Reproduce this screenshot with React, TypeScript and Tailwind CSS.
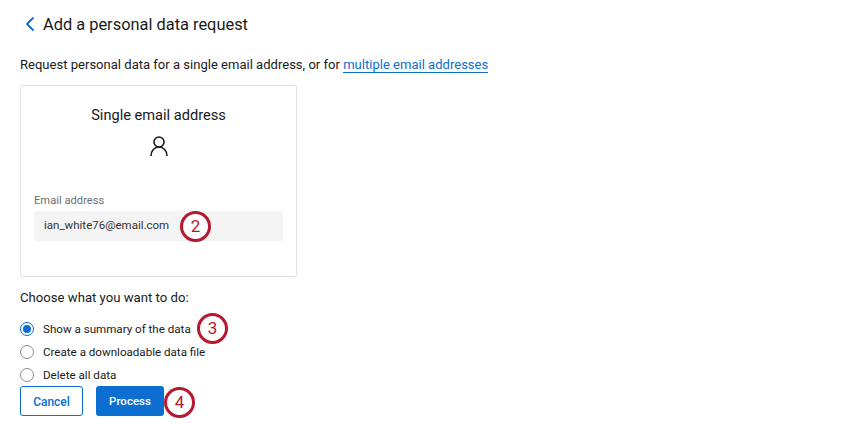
import { ChevronLeft } from 'lucide-react';

type BadgeProps = {
    n: number;
    className: string;
};

// Red numbered callout that sits over the screenshot content
function Badge({ n, className }: BadgeProps) {
    return (
        <span
            className={`absolute flex h-[31px] w-[31px] items-center justify-center rounded-full border-[3px] border-[#b5192f] bg-white text-[17px] text-[#b5192f] ${className}`}
        >
            {n}
        </span>
    );
}

function Radio({ label, checked }: { label: string; checked?: boolean }) {
    return (
        <label className="flex h-[23px] items-center gap-[9px] text-[11.6px] text-[#1a1a1a]">
            <span
                className={`flex h-[14px] w-[14px] items-center justify-center rounded-full border bg-white ${checked ? 'border-[#0b6ed0]' : 'border-[#8c8c8c]'}`}
            >
                {checked && <span className="h-[8px] w-[8px] rounded-full bg-[#0b6ed0]" />}
            </span>
            <span className="pt-[2px]">{label}</span>
        </label>
    );
}

export default function App() {
    return (
        <div className="h-[424px] w-[850px] overflow-hidden bg-white pl-[20px] font-['Roboto',sans-serif] text-[#1a1a1a]">
            <header className="flex h-[48px] items-center gap-[1px] -ml-[2px]">
                <ChevronLeft className="h-[24px] w-[24px] text-[#0b6ed0]" strokeWidth={1.8} />
                <h1 className="pt-[2px] text-[16.4px] leading-none">Add a personal data request</h1>
            </header>

            <p className="mt-[7px] text-[13.05px] leading-[20px]">
                Request personal data for a single email address, or for{' '}
                <a className="border-b border-[#0b6ed0] text-[#0b6ed0]">multiple email addresses</a>
            </p>

            <section className="mt-[10px] flex h-[192px] w-[277px] flex-col rounded-[2px] border border-[#e3e3e3] px-[13px] pt-[19px] shadow-[0_0_1px_rgba(0,0,0,0.08)]">
                <h2 className="text-center text-[14.6px] leading-[20px]">Single email address</h2>
                <svg
                    viewBox="0 0 18 20"
                    className="mx-auto mt-[11px] h-[20px] w-[18px]"
                    fill="none"
                    stroke="#1a1a1a"
                    strokeWidth="1.6"
                >
                    <circle cx="9" cy="6" r="5" />
                    <path d="M1 20 C1 14.5 4.5 11 9 11 C13.5 11 17 14.5 17 20" />
                </svg>
                <label className="mt-[36px] text-[11.2px] leading-[18px] text-[#6f6f6f]">Email address</label>
                <div className="relative mt-[1px] flex h-[30px] items-center rounded-[2px] bg-[#f4f4f4] pl-[10px] text-[11.5px] text-[#333]">
                    ian_white76@email.com
                    <Badge n={2} className="left-[146px] top-0" />
                </div>
            </section>

            <p className="mt-[12px] text-[13.15px] leading-[18px]">Choose what you want to do:</p>

            <div className="relative mt-[10px] flex flex-col">
                <Radio label="Show a summary of the data" checked />
                <Radio label="Create a downloadable data file" />
                <Radio label="Delete all data" />
                <Badge n={3} className="left-[177px] top-[-4px]" />
            </div>

            <div className="relative flex gap-[13px]">
                <button className="h-[30px] w-[63px] rounded-[3px] border border-[#0b6ed0] bg-white pt-[1px] text-[12px] font-medium text-[#0b6ed0]">
                    Cancel
                </button>
                <button className="h-[30px] w-[68px] rounded-[3px] bg-[#0b6ed0] pt-[1px] text-[11.5px] font-medium text-white">
                    Process
                </button>
                <Badge n={4} className="left-[144px] top-[1px]" />
            </div>
        </div>
    );
}
